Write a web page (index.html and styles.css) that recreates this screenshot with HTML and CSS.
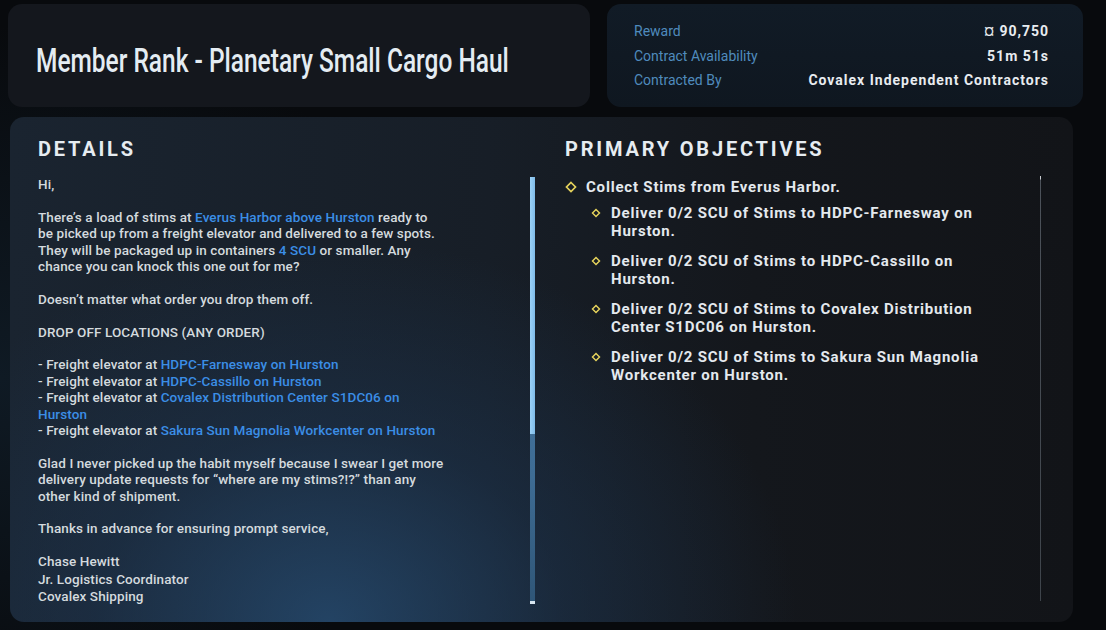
FILE: index.html
```html
<!DOCTYPE html>
<html lang="en">
<head>
<meta charset="utf-8">
<title>Contract</title>
<link rel="stylesheet" href="styles.css">
</head>
<body>
<div class="screen">
  <header class="top">
    <div class="card title-card">
      <h1 class="title">Member Rank - Planetary Small Cargo Haul</h1>
    </div>
    <div class="card info-card">
      <div class="info-row"><span class="label">Reward</span><span class="value">¤ 90,750</span></div>
      <div class="info-row"><span class="label">Contract Availability</span><span class="value">51m 51s</span></div>
      <div class="info-row"><span class="label">Contracted By</span><span class="value">Covalex Independent Contractors</span></div>
    </div>
  </header>

  <main class="panel">
    <section class="details">
      <h2 class="heading">DETAILS</h2>
      <div class="details-body">
        <div class="text">
          <p>Hi,</p>
          <p class="narrow">There’s a load of stims at <span class="link">Everus Harbor above Hurston</span> ready to be picked up from a freight elevator and delivered to a few spots. They will be packaged up in containers <span class="link">4 SCU</span> or smaller. Any chance you can knock this one out for me?</p>
          <p>Doesn’t matter what order you drop them off.</p>
          <p>DROP OFF LOCATIONS (ANY ORDER)</p>
          <p class="narrow">- Freight elevator at <span class="link">HDPC-Farnesway on Hurston</span><br>
          - Freight elevator at <span class="link">HDPC-Cassillo on Hurston</span><br>
          - Freight elevator at <span class="link">Covalex Distribution Center S1DC06 on Hurston</span><br>
          <span class="nowrap">- Freight elevator at <span class="link">Sakura Sun Magnolia Workcenter on Hurston</span></span></p>
          <p>Glad I never picked up the habit myself because I swear I get more delivery update requests for “where are my stims?!?” than any other kind of shipment.</p>
          <p>Thanks in advance for ensuring prompt service,</p>
          <p class="signature">Chase Hewitt<br>Jr. Logistics Coordinator<br>Covalex Shipping</p>
        </div>
        <div class="scrollbar"><span class="thumb"></span><span class="end"></span></div>
      </div>
    </section>

    <section class="objectives">
      <h2 class="heading">PRIMARY OBJECTIVES</h2>
      <div class="objectives-body">
        <ul class="obj-list">
          <li class="obj main">
            <svg class="diamond" viewBox="0 0 12 12"><path d="M6 1.5 L10.5 6 L6 10.5 L1.5 6 Z"/></svg>
            <span>Collect Stims from Everus Harbor.</span>
          </li>
          <li class="obj sub">
            <svg class="diamond" viewBox="0 0 12 12"><path d="M6 1.8 L10.2 6 L6 10.2 L1.8 6 Z"/></svg>
            <span>Deliver 0/2 SCU of Stims to HDPC-Farnesway on Hurston.</span>
          </li>
          <li class="obj sub">
            <svg class="diamond" viewBox="0 0 12 12"><path d="M6 1.8 L10.2 6 L6 10.2 L1.8 6 Z"/></svg>
            <span>Deliver 0/2 SCU of Stims to HDPC-Cassillo on Hurston.</span>
          </li>
          <li class="obj sub">
            <svg class="diamond" viewBox="0 0 12 12"><path d="M6 1.8 L10.2 6 L6 10.2 L1.8 6 Z"/></svg>
            <span>Deliver 0/2 SCU of Stims to Covalex Distribution Center S1DC06 on Hurston.</span>
          </li>
          <li class="obj sub">
            <svg class="diamond" viewBox="0 0 12 12"><path d="M6 1.8 L10.2 6 L6 10.2 L1.8 6 Z"/></svg>
            <span>Deliver 0/2 SCU of Stims to Sakura Sun Magnolia Workcenter on Hurston.</span>
          </li>
        </ul>
        <div class="track"></div>
      </div>
    </section>
  </main>
</div>
</body>
</html>
```

FILE: styles.css
```css
* { box-sizing: border-box; }

html, body {
  margin: 0;
  padding: 0;
  background: #080a0d;
  width: 1106px;
  height: 630px;
  overflow: hidden;
}

.screen {
  width: 1106px;
  height: 630px;
  padding: 4px 0 0 8px;
  font-family: Roboto, "Liberation Sans", sans-serif;
  color: #d6dbe0;
  background: radial-gradient(ellipse 60% 80% at 0% 60%, #0f1a24 0%, #080a0d 70%);
}

/* ---------- header ---------- */
.top {
  display: flex;
  gap: 17px;
  height: 103px;
}

.card {
  border-radius: 14px;
}

.title-card {
  width: 582px;
  background: #14171d;
  display: flex;
  align-items: center;
  padding: 9px 0 0 28px;
}

.title {
  margin: 0;
  font-family: Roboto, "Liberation Sans", sans-serif;
  font-weight: 500;
  font-size: 34px;
  letter-spacing: 0;
  color: #e4ecf2;
  transform: scaleX(0.72);
  transform-origin: left center;
  white-space: nowrap;
}

.info-card {
  width: 476px;
  background: linear-gradient(180deg, #111b26 0%, #0f1720 100%);
  padding: 15px 34px 0 27px;
}

.info-row {
  display: flex;
  justify-content: space-between;
  align-items: center;
  height: 24.5px;
}

.label {
  font-size: 14px;
  color: #4f8bbd;
}

.value {
  font-size: 14px;
  font-weight: 700;
  letter-spacing: 1px;
  color: #e8ecf0;
}

/* ---------- main panel ---------- */
.panel {
  margin: 10px 0 0 2px;
  width: 1063px;
  height: 505px;
  border-radius: 14px;
  display: flex;
  background:
    radial-gradient(ellipse 55% 95% at 30% 100%, rgba(40, 82, 124, 0.7) 0%, rgba(30, 56, 86, 0.45) 40%, rgba(20, 30, 42, 0) 80%),
    linear-gradient(90deg, #1a2430 0%, #171e27 45%, #14171c 70%, #121418 100%);
}

.heading {
  margin: 0;
  font-family: Roboto, "Liberation Sans", sans-serif;
  font-weight: 700;
  font-size: 20px;
  letter-spacing: 2.8px;
  line-height: 24px;
  color: #e6ecf1;
}

.details {
  width: 538px;
  padding: 20px 0 0 28px;
  display: flex;
  flex-direction: column;
}

.details-body {
  display: flex;
  margin-top: 15px;
}

.text {
  width: 408px;
  flex: none;
  font-size: 13.5px;
  font-weight: 500;
  letter-spacing: 0.1px;
  line-height: 16.4px;
  color: #d4dade;
}

.text p {
  margin: 0 0 16.4px 0;
}

.text .narrow {
  width: 405px;
}

.text .signature {
  line-height: 17.6px;
  margin: 0;
}

.nowrap {
  white-space: nowrap;
}

.link {
  color: #3b8ee6;
}

.scrollbar {
  margin-left: 84px;
  margin-top: 1px;
  width: 5px;
  height: 427px;
  display: flex;
  flex-direction: column;
  background: linear-gradient(180deg, #4a7ba6 0%, #3e6c94 70%, #2f5677 100%);
  border-radius: 1px;
}

.thumb {
  display: block;
  height: 257px;
  background: linear-gradient(90deg, #9bd2f8 0%, #7fbbe8 100%);
}

.end {
  margin-top: auto;
  height: 3px;
  background: #d8e6f0;
}

.objectives {
  flex: 1;
  padding: 20px 0 0 17px;
  display: flex;
  flex-direction: column;
}

.objectives-body {
  display: flex;
  margin-top: 12px;
}

.obj-list {
  list-style: none;
  margin: 5px 0 0 0;
  padding: 0;
  width: 475px;
}

.obj {
  display: flex;
  align-items: flex-start;
  font-weight: 700;
  font-size: 15px;
  letter-spacing: 0.8px;
  color: #e4e9ee;
}

.obj.main {
  line-height: 18px;
  margin-bottom: 8px;
}

.obj.sub {
  padding-left: 26px;
  line-height: 18px;
  margin-bottom: 12px;
}

.obj.sub span {
  width: 385px;
}

.diamond {
  flex: none;
  fill: none;
  stroke: #e6d35c;
  stroke-width: 1.7;
}

.obj.main .diamond {
  width: 12px;
  height: 12px;
  margin: 3px 9px 0 0;
}

.obj.sub .diamond {
  width: 10px;
  height: 10px;
  margin: 4px 10px 0 0;
}

.track {
  margin-top: 3px;
  width: 1px;
  height: 425px;
  background: linear-gradient(180deg, #c8ccd0 0px, #c8ccd0 3px, #4c525a 4px, #3e444b 100%);
}
```
